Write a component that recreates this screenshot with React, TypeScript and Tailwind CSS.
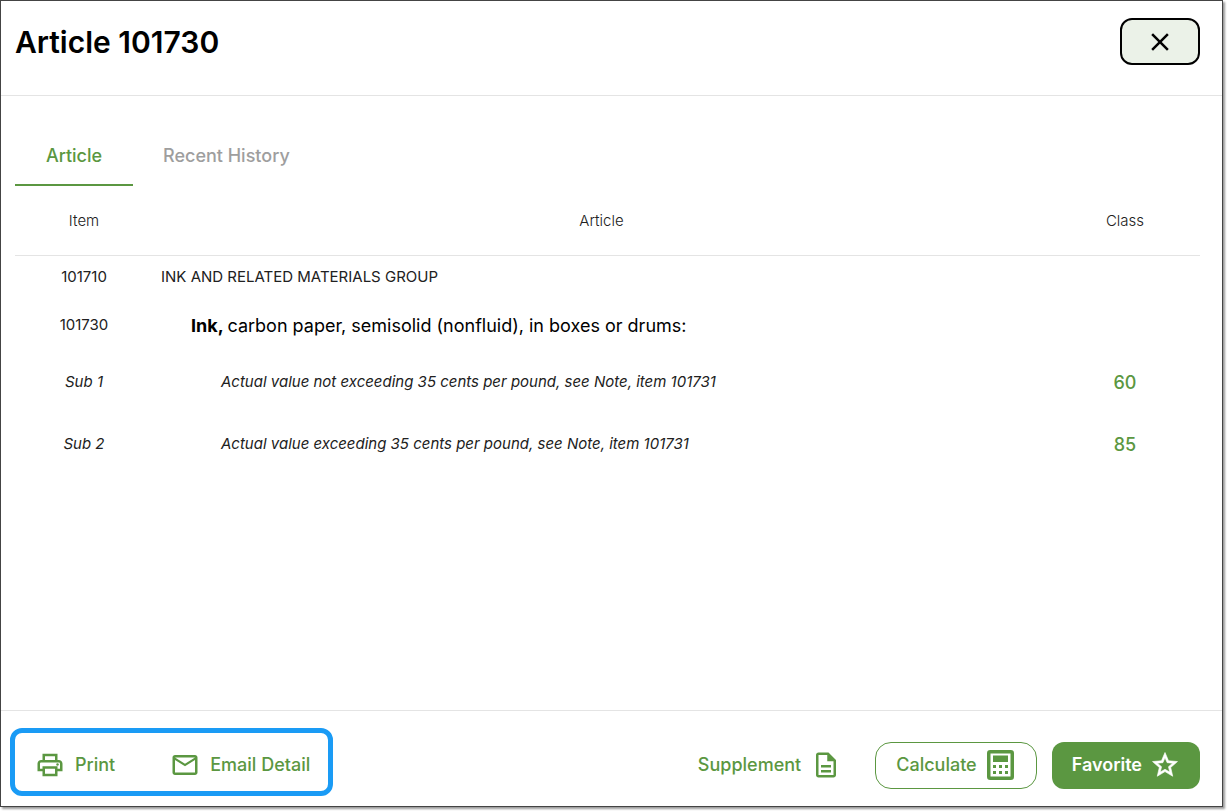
import { useState } from "react";
import {
  MdClose,
  MdMailOutline,
  MdOutlineDescription,
  MdOutlinePrint,
  MdStarOutline,
} from "react-icons/md";

interface ArticleRow {
  item: string;
  lead?: string;
  text: string;
  classNo?: string;
  rowClass: string;
  textClass: string;
}

const rows: ArticleRow[] = [
  {
    item: "101710",
    text: "INK AND RELATED MATERIALS GROUP",
    rowClass: "h-[44px]",
    textClass: "pl-[8px]",
  },
  {
    item: "101730",
    lead: "Ink,",
    text: "carbon paper, semisolid (nonfluid), in boxes or drums:",
    rowClass: "h-[52px]",
    textClass: "pl-[38px] text-[18px] text-black",
  },
  {
    item: "Sub 1",
    text: "Actual value not exceeding 35 cents per pound, see Note, item 101731",
    classNo: "60",
    rowClass: "h-[62px] italic",
    textClass: "pl-[68px]",
  },
  {
    item: "Sub 2",
    text: "Actual value exceeding 35 cents per pound, see Note, item 101731",
    classNo: "85",
    rowClass: "h-[62px] italic",
    textClass: "pl-[68px]",
  },
];

function CalculatorIcon() {
  return (
    <svg width="27" height="30" viewBox="0 0 27 30" fill="currentColor" aria-hidden="true">
      <rect x="1.75" y="1.75" width="23.5" height="26.5" rx="1.5" fill="none" stroke="currentColor" strokeWidth="3.5" />
      <rect x="6" y="5.5" width="15" height="6.5" />
      <path d="M6 15h3v3H6zM12 15h3v3h-3zM18 15h3v3h-3zM6 21h3v3H6zM12 21h3v3h-3zM18 21h3v3h-3z" />
    </svg>
  );
}

export default function App() {
  const [tab, setTab] = useState("article");

  const tabClass = (name: string) =>
    tab === name
      ? "min-w-[118px] border-b-2 border-[#5b9741] px-[30px] text-[#5b9741]"
      : "min-w-[118px] border-b-2 border-transparent px-[30px] text-[#9e9e9e]";

  return (
    <div className="flex min-h-screen bg-white pr-[5px] pb-[5px] font-['Inter','Liberation_Sans',sans-serif] text-[#212121]">
      <div className="flex flex-1 flex-col border border-[#444444] bg-white shadow-[2px_2px_2px_rgba(0,0,0,0.4)]">
        <header className="flex items-start justify-between border-b border-[#e4e4e4] pt-[17px] pr-[22px] pb-[29px] pl-[14px]">
          <h1 className="text-[30px] leading-[48px] font-semibold text-black">Article 101730</h1>
          <button
            aria-label="Close"
            className="flex h-[47px] w-20 items-center justify-center rounded-xl border-2 border-black bg-[#ebf2e8] text-black"
          >
            <MdClose size={30} />
          </button>
        </header>

        <main className="flex-1 pt-[30px] pr-[22px] pl-[14px]">
          <div role="tablist" className="flex h-[60px] text-[18px] font-medium">
            <button role="tab" aria-selected={tab === "article"} onClick={() => setTab("article")} className={tabClass("article")}>
              Article
            </button>
            <button role="tab" aria-selected={tab === "history"} onClick={() => setTab("history")} className={tabClass("history")}>
              Recent History
            </button>
          </div>

          <table className="w-full table-fixed text-[15px]">
            <thead>
              <tr className="h-[69px] border-b border-[#e4e4e4]">
                <th className="w-[138px] pt-[2px] font-light">Item</th>
                <th className="pt-[2px] font-light">Article</th>
                <th className="w-[150px] pt-[2px] font-light">Class</th>
              </tr>
            </thead>
            <tbody>
              {rows.map((row) => (
                <tr key={row.item} className={row.rowClass}>
                  <td className="text-center">{row.item}</td>
                  <td className={row.textClass}>
                    {row.lead && <b>{row.lead} </b>}
                    {row.text}
                  </td>
                  <td className="text-center text-[18px] font-medium text-[#5b9741] not-italic">{row.classNo}</td>
                </tr>
              ))}
            </tbody>
          </table>
        </main>

        <footer className="flex items-end justify-between border-t border-[#e4e4e4] pt-[17px] pr-[22px] pb-[10px] pl-[9px] text-[18px] font-medium text-[#5b9741]">
          <div className="flex rounded-xl border-5 border-[#1a9bf5] pt-[9px] pr-[18px] pb-[2px] pl-5">
            <button className="flex h-[47px] items-center gap-[10px] pr-[55px] pb-[2px]">
              <MdOutlinePrint size={30} />
              Print
            </button>
            <button className="flex h-[47px] items-center gap-[10px] pb-[2px]">
              <MdMailOutline size={30} />
              Email Detail
            </button>
          </div>
          <div className="flex pb-[7px]">
            <button className="mr-[34px] flex h-[47px] items-center gap-[10px] pb-[2px]">
              Supplement
              <MdOutlineDescription size={30} />
            </button>
            <button className="mr-[15px] flex h-[47px] items-center gap-[10px] rounded-2xl border border-[#5b9741] pr-[22px] pb-[2px] pl-5">
              Calculate
              <CalculatorIcon />
            </button>
            <button className="flex h-[47px] items-center gap-2 rounded-xl bg-[#5b9741] px-5 pb-[2px] font-semibold text-white">
              Favorite
              <MdStarOutline size={30} strokeWidth={0.5} />
            </button>
          </div>
        </footer>
      </div>
    </div>
  );
}
